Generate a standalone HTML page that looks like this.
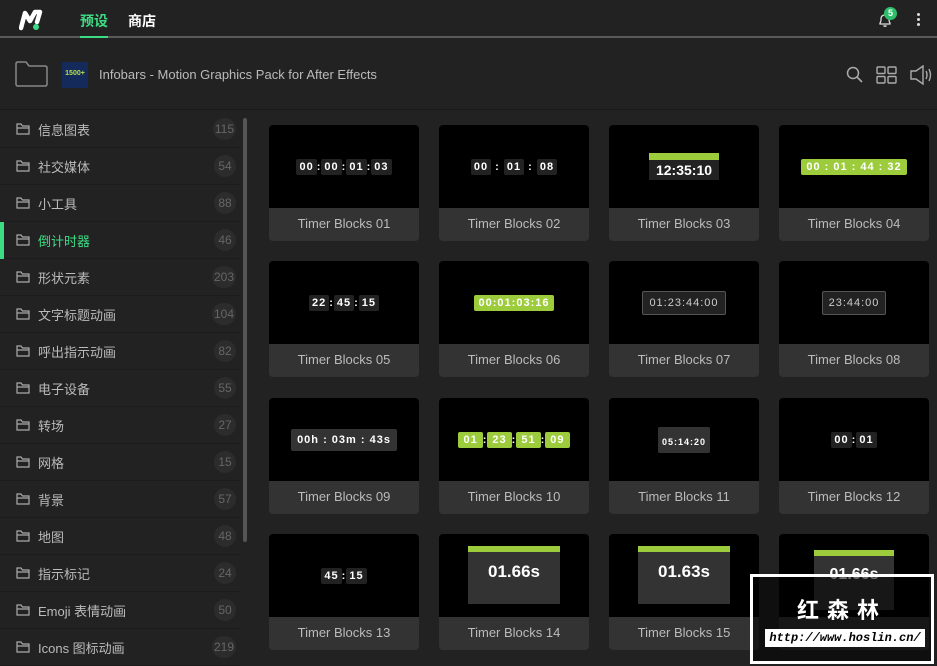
<!DOCTYPE html>
<html><head><meta charset="utf-8"><style>
*{margin:0;padding:0;box-sizing:border-box}
body{width:937px;height:666px;overflow:hidden;background:#222;font-family:"Liberation Sans","Noto Sans CJK SC",sans-serif;color:#ccc;position:relative}
.top{position:absolute;left:0;top:0;width:937px;height:38px;background:#222;border-bottom:2px solid #5a5a5a}
.tab{position:absolute;top:11px;font-size:14px;font-weight:bold}
.hdr{position:absolute;top:40px;left:0;width:937px;height:70px;border-bottom:1px solid #1a1a1a}
.side{position:absolute;left:0;top:111px;width:240px}
.row{height:37px;border-bottom:1px solid #1c1c1c;position:relative;font-size:13px;color:#bbb}
.row .t{position:absolute;left:38px;top:9px}
.row .n{position:absolute;right:4px;top:7px;min-width:22px;height:22px;border-radius:11px;background:#2c2c2c;color:#666;font-size:12px;text-align:center;line-height:22px;padding:0 2px}
.row svg{position:absolute;left:16px;top:12px}
.act{color:#3ddc84}
.act::before{content:"";position:absolute;left:0;top:0;width:4px;height:37px;background:#3ddc84}
.card{position:absolute;width:150px;height:116px;border-radius:4px;overflow:hidden;background:#333}
.th{height:83px;background:#000;position:relative;display:flex;align-items:center;justify-content:center}
.lb{height:33px;text-align:center;line-height:32px;font-size:13px;color:#bbb}
.tm{color:#fff;font-weight:bold;font-size:11px;letter-spacing:1px}
.bx{background:#222;padding:2px 3px;border-radius:2px}
.g{background:#9ccc3c;color:#fff;padding:2px 5px;border-radius:2px}
</style></head><body>
<div class="top">
<svg style="position:absolute;left:19px;top:9px" width="24" height="22" viewBox="0 0 24 22"><path d="M2 19 L6 4 L11 12 L16 3 L21 3 L18 13" stroke="#fff" stroke-width="4.5" fill="none" stroke-linejoin="round" stroke-linecap="round"/><circle cx="17" cy="18" r="3" fill="#3ddc84"/></svg>
<div class="tab" style="left:80px;color:#3ddc84">预设</div>
<div style="position:absolute;left:80px;top:36px;width:28px;height:2px;background:#3ddc84"></div>
<div class="tab" style="left:128px;color:#fff">商店</div>
<svg style="position:absolute;left:877px;top:12px" width="16" height="16" viewBox="0 0 16 16"><path d="M3 12 L3 11 Q4 10 4 7 Q4 3 8 3 Q12 3 12 7 Q12 10 13 11 L13 12 Z M6.5 13.5 Q8 15 9.5 13.5" stroke="#ddd" stroke-width="1.3" fill="none"/></svg>
<div style="position:absolute;left:884px;top:7px;width:13px;height:13px;border-radius:7px;background:#2ebd6b;color:#fff;font-size:9px;text-align:center;line-height:13px;font-weight:bold">5</div>
<div style="position:absolute;left:917px;top:13px;width:3px;height:3px;background:#ddd;border-radius:2px;box-shadow:0 5px 0 #ddd,0 10px 0 #ddd"></div>
</div>
<div class="hdr">
<svg style="position:absolute;left:15px;top:21px" width="33" height="26" viewBox="0 0 33 26"><path d="M1 3 Q1 1 3 1 L11 1 L14 5 L30 5 Q32 5 32 7 L32 23 Q32 25 30 25 L3 25 Q1 25 1 23 Z" stroke="#888" stroke-width="1.5" fill="none"/></svg>
<div style="position:absolute;left:62px;top:22px;width:26px;height:26px;background:#142a5a;color:#b8e04a;font-size:7px;font-weight:bold;text-align:center;line-height:24px">1500+</div>
<div style="position:absolute;left:99px;top:27px;font-size:13px;color:#bbb">Infobars - Motion Graphics Pack for After Effects</div>
<svg style="position:absolute;left:846px;top:26px" width="18" height="18" viewBox="0 0 18 18"><circle cx="7" cy="7" r="5.5" stroke="#aaa" stroke-width="1.5" fill="none"/><path d="M11 11 L16 16" stroke="#aaa" stroke-width="1.6"/></svg>
<svg style="position:absolute;left:876px;top:26px" width="21" height="18" viewBox="0 0 21 18"><g stroke="#aaa" stroke-width="1.4" fill="none"><rect x="1" y="1" width="8" height="6.5" rx="1"/><rect x="12" y="1" width="8" height="6.5" rx="1"/><rect x="1" y="10.5" width="8" height="6.5" rx="1"/><rect x="12" y="10.5" width="8" height="6.5" rx="1"/></g></svg>
<svg style="position:absolute;left:909px;top:25px" width="24" height="20" viewBox="0 0 24 20"><path d="M2 6 L7 6 L14 1 L14 19 L7 14 L2 14 Z" stroke="#aaa" stroke-width="1.4" fill="none"/><path d="M17 6 Q19 10 17 14 M20 4 Q23 10 20 16" stroke="#aaa" stroke-width="1.4" fill="none"/></svg>
</div>
<div style="position:absolute;left:243px;top:118px;width:4px;height:424px;background:#555;border-radius:2px"></div>
<div class="side">
<div class="row"><svg width="14" height="12" viewBox="0 0 14 12"><path d="M1 1 L5 1 L6.5 3 L13 3 L13 11 L1 11 Z M1 5 L13 5" stroke="#aaa" stroke-width="1.2" fill="none"/></svg><span class="t">信息图表</span><span class="n">115</span></div>
<div class="row"><svg width="14" height="12" viewBox="0 0 14 12"><path d="M1 1 L5 1 L6.5 3 L13 3 L13 11 L1 11 Z M1 5 L13 5" stroke="#aaa" stroke-width="1.2" fill="none"/></svg><span class="t">社交媒体</span><span class="n">54</span></div>
<div class="row"><svg width="14" height="12" viewBox="0 0 14 12"><path d="M1 1 L5 1 L6.5 3 L13 3 L13 11 L1 11 Z M1 5 L13 5" stroke="#aaa" stroke-width="1.2" fill="none"/></svg><span class="t">小工具</span><span class="n">88</span></div>
<div class="row act"><svg width="14" height="12" viewBox="0 0 14 12"><path d="M1 1 L5 1 L6.5 3 L13 3 L13 11 L1 11 Z M1 5 L13 5" stroke="#aaa" stroke-width="1.2" fill="none"/></svg><span class="t">倒计时器</span><span class="n">46</span></div>
<div class="row"><svg width="14" height="12" viewBox="0 0 14 12"><path d="M1 1 L5 1 L6.5 3 L13 3 L13 11 L1 11 Z M1 5 L13 5" stroke="#aaa" stroke-width="1.2" fill="none"/></svg><span class="t">形状元素</span><span class="n">203</span></div>
<div class="row"><svg width="14" height="12" viewBox="0 0 14 12"><path d="M1 1 L5 1 L6.5 3 L13 3 L13 11 L1 11 Z M1 5 L13 5" stroke="#aaa" stroke-width="1.2" fill="none"/></svg><span class="t">文字标题动画</span><span class="n">104</span></div>
<div class="row"><svg width="14" height="12" viewBox="0 0 14 12"><path d="M1 1 L5 1 L6.5 3 L13 3 L13 11 L1 11 Z M1 5 L13 5" stroke="#aaa" stroke-width="1.2" fill="none"/></svg><span class="t">呼出指示动画</span><span class="n">82</span></div>
<div class="row"><svg width="14" height="12" viewBox="0 0 14 12"><path d="M1 1 L5 1 L6.5 3 L13 3 L13 11 L1 11 Z M1 5 L13 5" stroke="#aaa" stroke-width="1.2" fill="none"/></svg><span class="t">电子设备</span><span class="n">55</span></div>
<div class="row"><svg width="14" height="12" viewBox="0 0 14 12"><path d="M1 1 L5 1 L6.5 3 L13 3 L13 11 L1 11 Z M1 5 L13 5" stroke="#aaa" stroke-width="1.2" fill="none"/></svg><span class="t">转场</span><span class="n">27</span></div>
<div class="row"><svg width="14" height="12" viewBox="0 0 14 12"><path d="M1 1 L5 1 L6.5 3 L13 3 L13 11 L1 11 Z M1 5 L13 5" stroke="#aaa" stroke-width="1.2" fill="none"/></svg><span class="t">网格</span><span class="n">15</span></div>
<div class="row"><svg width="14" height="12" viewBox="0 0 14 12"><path d="M1 1 L5 1 L6.5 3 L13 3 L13 11 L1 11 Z M1 5 L13 5" stroke="#aaa" stroke-width="1.2" fill="none"/></svg><span class="t">背景</span><span class="n">57</span></div>
<div class="row"><svg width="14" height="12" viewBox="0 0 14 12"><path d="M1 1 L5 1 L6.5 3 L13 3 L13 11 L1 11 Z M1 5 L13 5" stroke="#aaa" stroke-width="1.2" fill="none"/></svg><span class="t">地图</span><span class="n">48</span></div>
<div class="row"><svg width="14" height="12" viewBox="0 0 14 12"><path d="M1 1 L5 1 L6.5 3 L13 3 L13 11 L1 11 Z M1 5 L13 5" stroke="#aaa" stroke-width="1.2" fill="none"/></svg><span class="t">指示标记</span><span class="n">24</span></div>
<div class="row"><svg width="14" height="12" viewBox="0 0 14 12"><path d="M1 1 L5 1 L6.5 3 L13 3 L13 11 L1 11 Z M1 5 L13 5" stroke="#aaa" stroke-width="1.2" fill="none"/></svg><span class="t">Emoji 表情动画</span><span class="n">50</span></div>
<div class="row"><svg width="14" height="12" viewBox="0 0 14 12"><path d="M1 1 L5 1 L6.5 3 L13 3 L13 11 L1 11 Z M1 5 L13 5" stroke="#aaa" stroke-width="1.2" fill="none"/></svg><span class="t">Icons 图标动画</span><span class="n">219</span></div>
</div>

<div class="card" style="left:269px;top:125px"><div class="th"><span class="tm"><span class="bx">00</span>:<span class="bx">00</span>:<span class="bx">01</span>:<span class="bx">03</span></span></div><div class="lb">Timer Blocks 01</div></div>
<div class="card" style="left:439px;top:125px"><div class="th"><span class="tm"><span class="bx">00</span> : <span class="bx">01</span> : <span class="bx">08</span></span></div><div class="lb">Timer Blocks 02</div></div>
<div class="card" style="left:609px;top:125px"><div class="th"><div style="width:70px;background:#222;color:#fff;text-align:center;font-weight:bold;font-size:14px;border-top:7px solid #9ccc3c;padding:2px 0">12:35:10</div></div><div class="lb">Timer Blocks 03</div></div>
<div class="card" style="left:779px;top:125px"><div class="th"><span class="tm g">00 : 01 : 44 : 32</span></div><div class="lb">Timer Blocks 04</div></div>
<div class="card" style="left:269px;top:261px"><div class="th"><span class="tm"><span class="bx">22</span>:<span class="bx">45</span>:<span class="bx">15</span></span></div><div class="lb">Timer Blocks 05</div></div>
<div class="card" style="left:439px;top:261px"><div class="th"><span class="tm g">00:01:03:16</span></div><div class="lb">Timer Blocks 06</div></div>
<div class="card" style="left:609px;top:261px"><div class="th"><span class="tm bx" style="font-weight:normal;color:#ccc;border:1px solid #555;padding:5px 6px">01:23:44:00</span></div><div class="lb">Timer Blocks 07</div></div>
<div class="card" style="left:779px;top:261px"><div class="th"><span class="tm bx" style="font-weight:normal;color:#ccc;border:1px solid #555;padding:5px 6px">23:44:00</span></div><div class="lb">Timer Blocks 08</div></div>
<div class="card" style="left:439px;top:398px"><div class="th"><span class="tm"><span class="g">01</span>:<span class="g">23</span>:<span class="g">51</span>:<span class="g">09</span></span></div><div class="lb">Timer Blocks 10</div></div>
<div class="card" style="left:269px;top:398px"><div class="th"><span class="tm bx" style="background:#333;padding:5px 6px">00h : 03m : 43s</span></div><div class="lb">Timer Blocks 09</div></div>
<div class="card" style="left:609px;top:398px"><div class="th"><span class="tm bx" style="background:#333;padding:10px 4px 6px;font-size:9px">05:14:20</span></div><div class="lb">Timer Blocks 11</div></div>
<div class="card" style="left:779px;top:398px"><div class="th"><span class="tm"><span class="bx">00</span>:<span class="bx">01</span></span></div><div class="lb">Timer Blocks 12</div></div>
<div class="card" style="left:269px;top:534px"><div class="th"><span class="tm"><span class="bx">45</span>:<span class="bx">15</span></span></div><div class="lb">Timer Blocks 13</div></div>
<div class="card" style="left:439px;top:534px"><div class="th" style="align-items:flex-start;padding-top:12px"><div style="width:92px;height:58px;background:#333;border-top:6px solid #9ccc3c;color:#fff;font-weight:bold;font-size:17px;text-align:center;padding-top:10px">01.66s</div></div><div class="lb">Timer Blocks 14</div></div>
<div class="card" style="left:609px;top:534px"><div class="th" style="align-items:flex-start;padding-top:12px"><div style="width:92px;height:58px;background:#333;border-top:6px solid #9ccc3c;color:#fff;font-weight:bold;font-size:17px;text-align:center;padding-top:10px">01.63s</div></div><div class="lb">Timer Blocks 15</div></div>
<div class="card" style="left:779px;top:534px"><div class="th" style="align-items:flex-start;padding-top:16px"><div style="width:80px;height:60px;background:#333;border-top:6px solid #9ccc3c;color:#fff;font-weight:bold;font-size:16px;text-align:center;padding-top:10px">01.66s</div></div><div class="lb"></div></div>

<div style="position:absolute;left:750px;top:574px;width:184px;height:90px;border:3px solid #fff;background:rgba(0,0,0,0.55)">
<div style="position:absolute;left:0;width:178px;top:16px;text-align:center;color:#fff;font-size:22px;font-weight:bold;letter-spacing:8px">红森林</div>
<div style="position:absolute;left:12px;top:52px;width:160px;height:18px;background:#fff;color:#000;font-family:'Liberation Mono',monospace;font-style:italic;font-weight:bold;font-size:12px;line-height:18px;text-align:center">http://www.hoslin.cn/</div>
</div>
</body></html>
